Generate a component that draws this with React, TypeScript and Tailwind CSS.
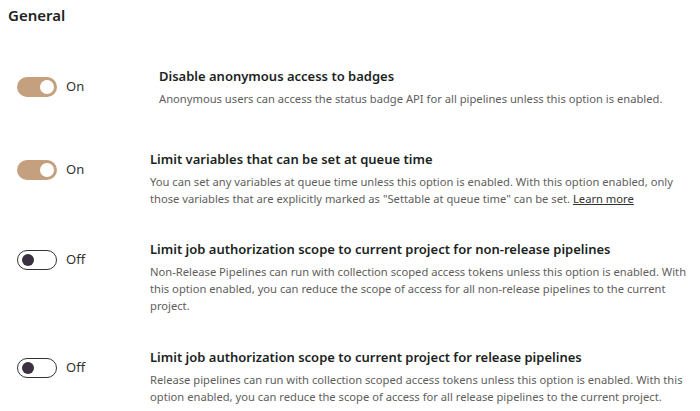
import React from "react";

function Toggle({ on }: { on: boolean }) {
  return (
    <div className="flex items-center">
      {on ? (
        <div className="w-[40px] h-[20px] rounded-full bg-[#c4a07e] flex items-center justify-end pr-[3px]">
          <div className="w-[14px] h-[14px] rounded-full bg-white" />
        </div>
      ) : (
        <div className="w-[40px] h-[20px] rounded-full border border-[#333] bg-white flex items-center pl-[4px]">
          <div className="w-[12px] h-[12px] rounded-full bg-[#3b3142]" />
        </div>
      )}
      <span className="ml-[9px] text-[13px] text-[#323130]">{on ? "On" : "Off"}</span>
    </div>
  );
}

function Row({
  on,
  title,
  lines,
  indent,
  className,
}: {
  on: boolean;
  title: string;
  lines: React.ReactNode[];
  indent: string;
  className: string;
}) {
  return (
    <div className={"flex items-start " + className}>
      <div className={"pl-[17px] pt-[10px] shrink-0 " + indent}>
        <Toggle on={on} />
      </div>
      <div className="flex flex-col">
        <div className="text-[13px] font-semibold text-[#201f1e] leading-[18px] whitespace-nowrap">{title}</div>
        <div className="mt-[5px] text-[11.2px] text-[#605e5c] leading-[17px] flex flex-col">
          {lines.map((l, i) => (
            <div key={i} className="whitespace-nowrap">
              {l}
            </div>
          ))}
        </div>
      </div>
    </div>
  );
}

export default function App() {
  return (
    <div
      className="w-[700px] h-[411px] bg-white overflow-hidden"
      style={{ fontFamily: '"Noto Sans", sans-serif' }}
    >
      <div className="pl-[8px] pt-[5px] text-[15px] font-semibold text-[#201f1e] leading-[20px]">General</div>
      <Row
        on={true}
        indent="w-[159px]"
        className="mt-[42px]"
        title="Disable anonymous access to badges"
        lines={["Anonymous users can access the status badge API for all pipelines unless this option is enabled."]}
      />
      <Row
        on={true}
        indent="w-[150px]"
        className="mt-[43px]"
        title="Limit variables that can be set at queue time"
        lines={[
          "You can set any variables at queue time unless this option is enabled. With this option enabled, only",
          <>
            those variables that are explicitly marked as "Settable at queue time" can be set.{" "}
            <span className="underline text-[#323130]">Learn more</span>
          </>,
        ]}
      />
      <Row
        on={false}
        indent="w-[150px]"
        className="mt-[33px]"
        title="Limit job authorization scope to current project for non-release pipelines"
        lines={[
          "Non-Release Pipelines can run with collection scoped access tokens unless this option is enabled. With",
          "this option enabled, you can reduce the scope of access for all non-release pipelines to the current",
          "project.",
        ]}
      />
      <Row
        on={false}
        indent="w-[150px]"
        className="mt-[34px]"
        title="Limit job authorization scope to current project for release pipelines"
        lines={[
          "Release pipelines can run with collection scoped access tokens unless this option is enabled. With this",
          "option enabled, you can reduce the scope of access for all release pipelines to the current project.",
        ]}
      />
    </div>
  );
}
